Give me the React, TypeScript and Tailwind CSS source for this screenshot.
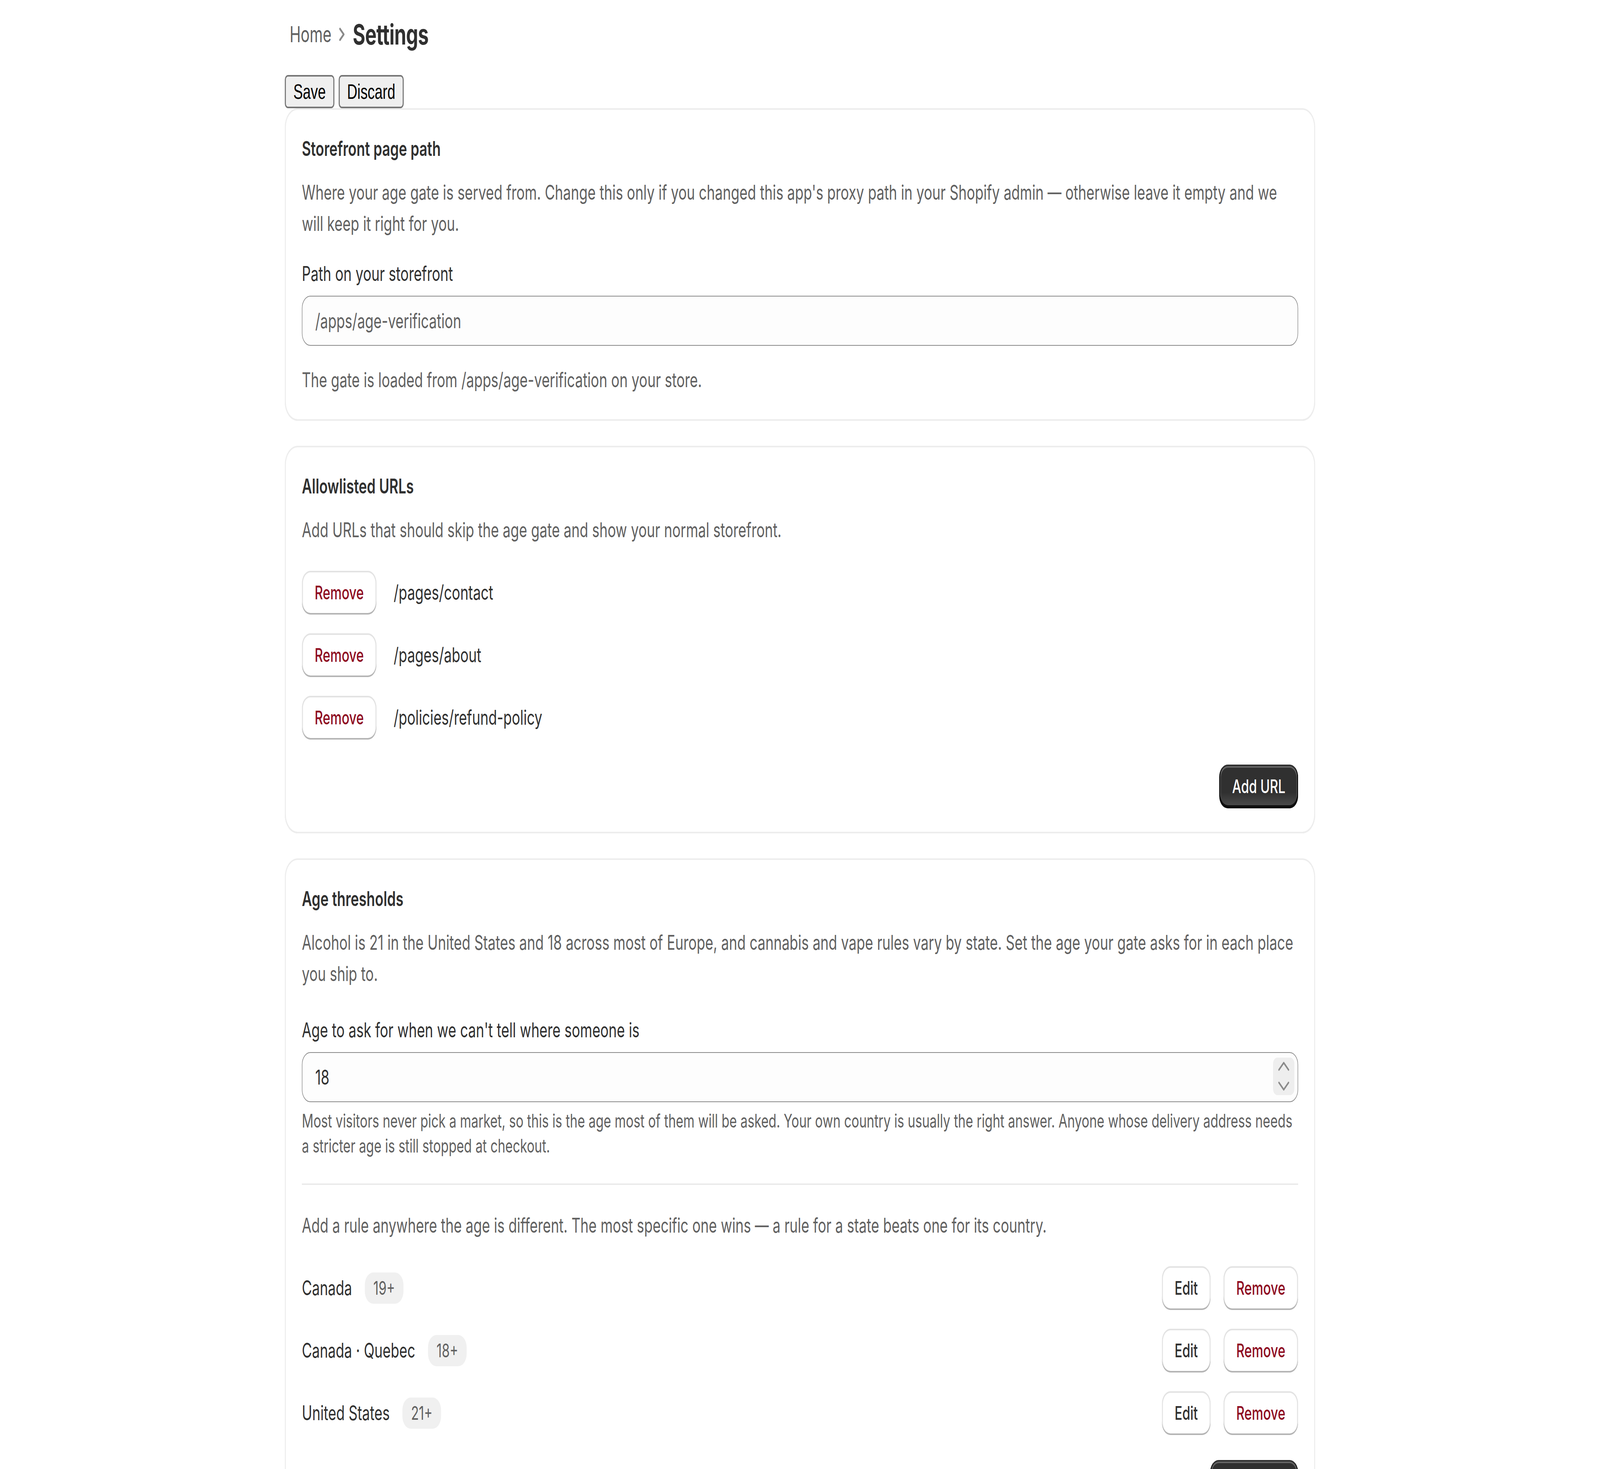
import React from "react";

const font = "font-['Inter','Noto_Sans',sans-serif]";

function Card({ children }: { children: React.ReactNode }) {
  return (
    <div className="rounded-xl bg-white p-4 shadow-[inset_0_0_0_1px_#ededed,inset_0_-1px_0_0_#e0e0e0]">
      {children}
    </div>
  );
}

function SecondaryButton({ children, critical }: { children: React.ReactNode; critical?: boolean }) {
  return (
    <button
      className={
        "h-7 shrink-0 rounded-lg bg-white px-3 text-[12px] leading-4 font-[550] shadow-[inset_0_-1px_0_0_#b5b5b5,inset_0_0_0_1px_#e3e3e3,inset_0_0.5px_0_1.5px_#ffffff] " +
        (critical ? "text-[#8e0b21]" : "text-[#303030]")
      }
    >
      {children}
    </button>
  );
}

function PrimaryButton({ children }: { children: React.ReactNode }) {
  return (
    <button className="h-7 shrink-0 rounded-lg px-3 text-[12px] leading-4 font-[550] text-white [background:linear-gradient(180deg,rgba(48,48,48,0)_63.53%,rgba(255,255,255,0.15)_100%),#303030] shadow-[inset_0_-1px_0_1px_rgba(0,0,0,0.8),inset_0_0_0_1px_#303030,inset_0_0.5px_0_1.5px_rgba(255,255,255,0.25)]">
      {children}
    </button>
  );
}

function Heading({ children }: { children: React.ReactNode }) {
  return <h2 className="text-[13px] leading-5 font-semibold text-[#303030]">{children}</h2>;
}

function Desc({ children }: { children: React.ReactNode }) {
  return <p className="text-[13px] leading-5 text-[#616161]">{children}</p>;
}

function Badge({ children }: { children: React.ReactNode }) {
  return (
    <span className="rounded-lg bg-[#f0f0f0] px-2 py-0.5 text-[12px] leading-4 text-[#616161]">{children}</span>
  );
}

function Spinner() {
  return (
    <div className="absolute right-[3.5px] top-[3.5px] h-6 w-5 rounded-[4px] bg-[#eeeeee]">
      <svg viewBox="0 0 20 24" className="h-6 w-5" fill="none" stroke="#8a8a8a" strokeWidth="1.2" strokeLinecap="round" strokeLinejoin="round">
        <polyline points="5.5,7.8 10,3.3 14.5,7.8" />
        <polyline points="5.5,16 10,20.5 14.5,16" />
      </svg>
    </div>
  );
}

function RuleRow({ name, age }: { name: string; age: string }) {
  return (
    <div className="flex items-center justify-between">
      <div className="flex items-center gap-3">
        <span className="text-[13px] leading-5 text-[#303030]">{name}</span>
        <Badge>{age}</Badge>
      </div>
      <div className="flex items-center gap-3">
        <SecondaryButton>Edit</SecondaryButton>
        <SecondaryButton critical>Remove</SecondaryButton>
      </div>
    </div>
  );
}

export default function App() {
  // The design is laid out for a 1500px-wide page shown at 4x (a 6000px frame);
  // fit it to the real width of the window if that differs.
  const [sx, setSx] = React.useState(1);
  React.useLayoutEffect(() => {
    const update = () => setSx(Math.min(1, document.documentElement.clientWidth / 6000));
    update();
    window.addEventListener("resize", update);
    return () => window.removeEventListener("resize", update);
  }, []);

  return (
    <div className="h-screen overflow-hidden bg-white">
      <div className={"w-[1500px] origin-top-left bg-white [zoom:4] " + font} style={{ transform: `scaleX(${sx})` }}>
        <div className="mx-auto max-w-[998px] px-4 pt-[10px]">
          <div className="flex h-6 items-center pl-[4.5px]">
            <span className="text-[14px] leading-5 text-[#616161]">Home</span>
            <svg viewBox="0 0 20 20" className="h-5 w-5" fill="none" stroke="#8a8a8a" strokeWidth="1.5" strokeLinecap="round" strokeLinejoin="round">
              <polyline points="8,6.5 11.5,10 8,13.5" />
            </svg>
            <h1 className="text-[18px] leading-6 font-bold tracking-[-0.2px] text-[#303030]">Settings</h1>
          </div>

          <div className="mt-[14px] flex gap-1 font-['Liberation_Sans',Arial,sans-serif]">
            <button className="rounded-[3px] border border-[#767676] bg-[#efefef] px-[7px] py-[2px] text-[13.333px] leading-[normal] text-black">
              Save
            </button>
            <button className="rounded-[3px] border border-[#767676] bg-[#efefef] px-[7px] py-[2px] text-[13.333px] leading-[normal] text-black">
              Discard
            </button>
          </div>

          <div className="flex flex-col gap-4">
            <Card>
              <Heading>Storefront page path</Heading>
              <div className="mt-2">
                <Desc>
                  Where your age gate is served from. Change this only if you changed this app's proxy path in your Shopify
                  admin — otherwise leave it empty and we will keep it right for you.
                </Desc>
              </div>
              <label className="mt-3 block text-[13px] leading-5 text-[#303030]">Path on your storefront</label>
              <input
                type="text"
                placeholder="/apps/age-verification"
                className="mt-1 block h-8 w-full rounded-lg border-[0.66px] border-[#8a8a8a] bg-[#fdfdfd] px-3 text-[13px] text-[#303030] outline-none placeholder:text-[#616161]"
              />
              <div className="mt-3">
                <Desc>The gate is loaded from /apps/age-verification on your store.</Desc>
              </div>
            </Card>

            <Card>
              <Heading>Allowlisted URLs</Heading>
              <div className="mt-2">
                <Desc>Add URLs that should skip the age gate and show your normal storefront.</Desc>
              </div>
              <div className="mt-4 flex flex-col gap-3">
                {["/pages/contact", "/pages/about", "/policies/refund-policy"].map((u) => (
                  <div key={u} className="flex items-center gap-4">
                    <SecondaryButton critical>Remove</SecondaryButton>
                    <span className="text-[13px] leading-5 text-[#303030]">{u}</span>
                  </div>
                ))}
              </div>
              <div className="mt-4 flex justify-end">
                <PrimaryButton>Add URL</PrimaryButton>
              </div>
            </Card>

            <Card>
              <Heading>Age thresholds</Heading>
              <div className="mt-2">
                <Desc>
                  Alcohol is 21 in the United States and 18 across most of Europe, and cannabis and vape rules vary by
                  state. Set the age your gate asks for in each place you ship to.
                </Desc>
              </div>
              <label className="mt-4 block text-[13px] leading-5 text-[#303030]">
                Age to ask for when we can't tell where someone is
              </label>
              <div className="relative mt-1">
                <input
                  type="text"
                  defaultValue="18"
                  readOnly
                  className="block h-8 w-full rounded-lg border-[0.66px] border-[#8a8a8a] bg-[#fdfdfd] px-3 text-[13px] text-[#303030] outline-none"
                />
                <Spinner />
              </div>
              <p className="mt-1 text-[12px] leading-4 text-[#616161]">
                Most visitors never pick a market, so this is the age most of them will be asked. Your own country is
                usually the right answer. Anyone whose delivery address needs a stricter age is still stopped at checkout.
              </p>
              <div className="my-4 h-px bg-[#ebebeb]" />
              <Desc>
                Add a rule anywhere the age is different. The most specific one wins — a rule for a state beats one for its
                country.
              </Desc>
              <div className="mt-4 flex flex-col gap-3">
                <RuleRow name="Canada" age="19+" />
                <RuleRow name="Canada · Quebec" age="18+" />
                <RuleRow name="United States" age="21+" />
              </div>
              <div className="mt-4 flex justify-end">
                <PrimaryButton>Add a rule</PrimaryButton>
              </div>
            </Card>
          </div>
        </div>
      </div>
    </div>
  );
}
